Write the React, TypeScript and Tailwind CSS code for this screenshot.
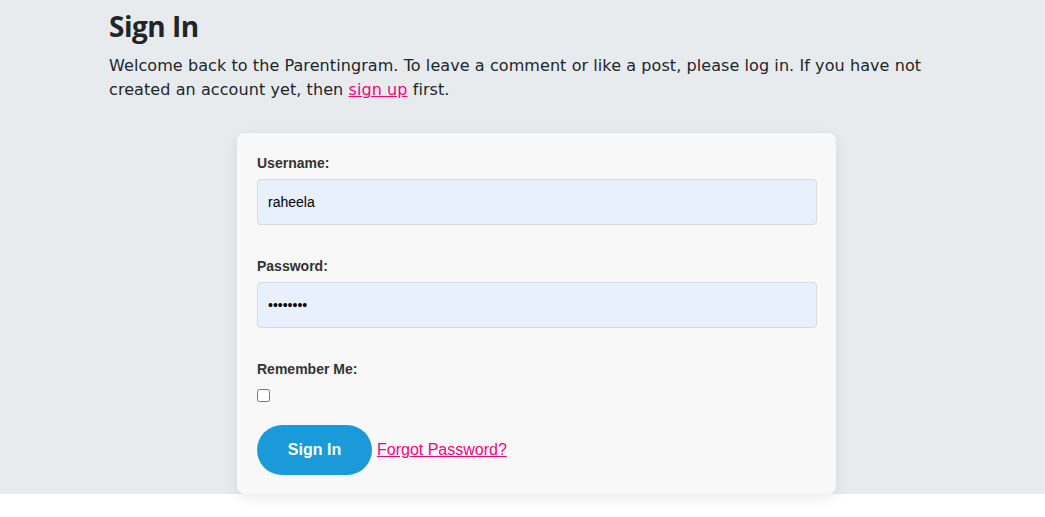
export default function App() {
  return (
    <div className="min-h-screen bg-white">
      <section className="bg-[#e7ebee] h-[494px]">
        <div className="mx-auto w-[827px] pt-[8px]">
          <h1 className="font-['Open_Sans',sans-serif] font-bold text-[28px] leading-[36px] text-[#212529] tracking-[-0.5px]">
            Sign In
          </h1>
          <p className="mt-[10px] font-['DejaVu_Sans',sans-serif] text-[16px] leading-[24px] tracking-[0.08px] text-[#212529]">
            Welcome back to the Parentingram. To leave a comment or like a post, please log in. If you have not
            created an account yet, then{" "}
            <a href="#" className="text-[#f0067f] underline">
              sign up
            </a>{" "}
            first.
          </p>

          <div className="ml-[128px] mt-[31px] w-[599px] h-[361px] rounded-lg bg-[#f8f8f8] shadow-[0_4px_14px_rgba(0,0,0,0.08)] px-5 pt-[22px] font-['Liberation_Sans',sans-serif] text-[#333]">
            <label className="block text-[14px] font-bold leading-[16px]">Username:</label>
            <input
              defaultValue="raheela"
              className="mt-[8px] block w-[560px] h-[46px] rounded border border-[#d6dbe0] bg-[#e8f0fe] px-[10px] text-[14px] text-black outline-none"
            />

            <label className="block mt-[33px] text-[14px] font-bold leading-[16px]">Password:</label>
            <input
              type="password"
              defaultValue="password"
              className="mt-[8px] block w-[560px] h-[46px] rounded border border-[#d6dbe0] bg-[#e8f0fe] px-[10px] text-[14px] text-black outline-none"
            />

            <label className="block mt-[33px] text-[14px] font-bold leading-[16px]">Remember Me:</label>
            <input type="checkbox" className="block mt-[12px] w-[13px] h-[13px]" />

            <div className="mt-[23px] flex items-center gap-[5px]">
              <button className="w-[115px] h-[50px] rounded-full bg-[#1a9ad8] text-white text-[16px] font-bold">
                Sign In
              </button>
              <a href="#" className="text-[16px] text-[#f0067f] underline">
                Forgot Password?
              </a>
            </div>
          </div>
        </div>
      </section>
    </div>
  );
}
